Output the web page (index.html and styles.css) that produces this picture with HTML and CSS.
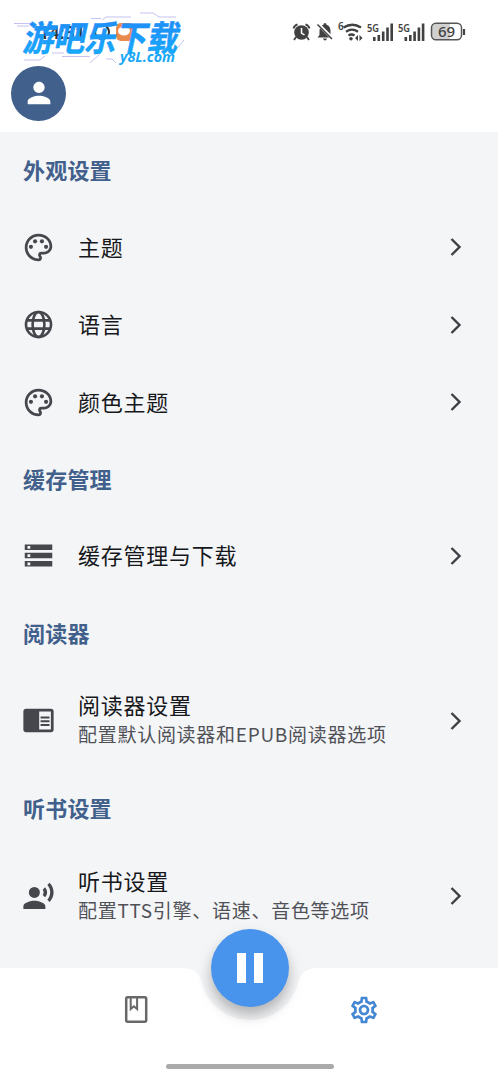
FILE: index.html
```html
<!DOCTYPE html>
<html lang="zh-CN">
<head>
<meta charset="utf-8">
<title>设置</title>
<link rel="stylesheet" href="styles.css">
</head>
<body>
<svg class="defs" width="0" height="0">
  <symbol id="palette" viewBox="0 0 24 24"><path d="M12 22C6.490 22 2 17.510 2 12S6.490 2 12 2s10 4.040 10 9c0 3.310-2.690 6-6 6h-1.770c-.28 0-.5.22-.5.5 0 .12.05.23.13.33.41.47.64 1.060.64 1.670A2.500 2.500 0 0 1 12 22zm0-18c-4.410 0-8 3.590-8 8s3.590 8 8 8c.28 0 .5-.22.5-.5a.54.54 0 0 0-.14-.35c-.41-.46-.63-1.050-.63-1.650a2.500 2.500 0 0 1 2.500-2.500H16c2.210 0 4-1.790 4-4 0-3.860-3.590-7-8-7z"/><circle cx="6.500" cy="11.500" r="1.500"/><circle cx="9.500" cy="7.500" r="1.500"/><circle cx="14.500" cy="7.500" r="1.500"/><circle cx="17.500" cy="11.500" r="1.500"/></symbol>
  <symbol id="chevron" viewBox="0 0 12 20"><path d="M1.500 2 9.500 10l-8 8" fill="none" stroke="currentColor" stroke-width="2.400"/></symbol>
</svg>
<div class="screen">
  <header class="top">
    <div class="status">
      <svg class="status-icons" viewBox="0 0 230 60" width="230" height="60">
        <g fill="#414141">
          <circle cx="31.500" cy="32.500" r="7.300"/>
          <path d="M26 37l-2 3M37 37l2 3M23.500 28.500q.5-3 4-4.200M39.500 28.500q-.5-3-4-4.200" fill="none" stroke="#414141" stroke-width="1.800"/>
          <path d="M31.500 28v5l3 2" fill="none" stroke="#fff" stroke-width="1.500"/>
          <path d="M47.500 37.500l2-2.500v-4q0-5 4-6.200q0-1.800 1.500-1.800t1.500 1.800q4 1.200 4 6.200v4l2 2.500zM53 38.500h4q-.5 2-2 2t-2-2z"/>
          <path d="M47.500 23.500l15 15" stroke="#fff" stroke-width="3.200"/>
          <path d="M47.500 24.500l14.500 14.500" stroke="#414141" stroke-width="1.500"/>
          <g fill="none" stroke="#414141" stroke-width="2.300"><path d="M73.500 27.500q9-5.500 17.500 0M76 31.800q6-4.200 12 0M78.500 35.500q3-2 6 0"/></g>
          <circle cx="81" cy="38.700" r="1.800"/><path d="M88 35v6l-3-3zM89.500 35v6l3-3z"/>
          <path d="M103 37h2.600v4H103zM107.500 35h2.600v6h-2.600zM111.900 31.500h2.600V41h-2.600zM116.200 27.500h2.600V41h-2.600zM120.400 23.500h2.600V41h-2.600zM134.500 37h2.600v4h-2.600zM139 35h2.600v6H139zM143.300 31.500h2.600V41h-2.600zM147.600 27.500h2.600V41h-2.600zM151.800 23.500h2.600V41h-2.600z"/>
          <text x="68" y="30" font-size="10" font-weight="600">6</text>
          <text x="97" y="31.500" font-size="11.500" font-weight="600" textLength="12" lengthAdjust="spacingAndGlyphs">5G</text>
          <text x="128" y="31.500" font-size="11.500" font-weight="600" textLength="12" lengthAdjust="spacingAndGlyphs">5G</text>
        </g>
        <path d="M167 24h13v15h-13q-5 0-5-4v-7q0-4 5-4z" fill="#d0d0d0"/>
        <rect x="161.500" y="23.300" width="30" height="16.500" rx="4.500" fill="none" stroke="#555" stroke-width="1.500"/>
        <path d="M194 29v6" stroke="#444" stroke-width="2.200"/>
        <text x="176.500" y="37" font-size="15" font-weight="500" text-anchor="middle" fill="#414141">69</text>
      </svg>
    </div>
    <div class="avatar"><svg viewBox="0 0 24 24" width="34" height="34"><path fill="#fff" d="M12 12c2.210 0 4-1.790 4-4s-1.790-4-4-4-4 1.790-4 4 1.790 4 4 4zm0 2c-2.670 0-8 1.340-8 4v2h16v-2c0-2.660-5.330-4-8-4z"/></svg></div>
    <svg class="watermark" viewBox="0 0 200 72" width="200" height="72">
      <defs><linearGradient id="blue" x1="0" y1="0" x2="0" y2="1"><stop offset="0" stop-color="#2583f5"/><stop offset="1" stop-color="#10b2ff"/></linearGradient></defs>
      <g class="clock"><text x="39" y="39" font-size="18">14:31</text><circle cx="102" cy="32" r="7" fill="none" stroke="#333" stroke-width="2"/></g>
      <rect x="116" y="23" width="18" height="18" rx="5" fill="#e88b4d"/><ellipse cx="124" cy="31" rx="6" ry="4.500" fill="#fff"/>
      <path d="M14 23.500h18M17 26h12M91 18.500h10M102 20l4-3h25M140 13h13l6 4h17M24 60h16l5-4M52 53h12M62 56.500h28M90 63l10-9M106 59h6l4 4M176 50l8-10" stroke="#b5b3ec" stroke-width=".8" fill="none"/>
      <g transform="translate(23 50.500) skewX(-12)"><text class="brand" x="-1" y="0" textLength="155" lengthAdjust="spacingAndGlyphs">游吧乐下载</text></g>
      <text class="domain" x="120" y="61.500" textLength="55" lengthAdjust="spacingAndGlyphs">y8L.com</text>
    </svg>
  </header>
  <main class="settings">
    <h2>外观设置</h2>
    <div class="row"><svg class="icon" viewBox="0 0 24 24"><use href="#palette"/></svg><div class="label">主题</div><svg class="chev"><use href="#chevron"/></svg></div>
    <div class="row"><svg class="icon" viewBox="0 0 24 24"><g fill="none" stroke="currentColor" stroke-width="1.900"><circle cx="12" cy="12" r="9.100"/><ellipse cx="12" cy="12" rx="4.300" ry="9.100"/><path d="M3.500 9h17M3.500 15h17"/></g></svg><div class="label">语言</div><svg class="chev"><use href="#chevron"/></svg></div>
    <div class="row"><svg class="icon" viewBox="0 0 24 24"><use href="#palette"/></svg><div class="label">颜色主题</div><svg class="chev"><use href="#chevron"/></svg></div>
    <h2>缓存管理</h2>
    <div class="row"><svg class="icon" viewBox="0 0 24 24"><path d="M2 20h20v-4H2v4zm2-3h2v2H4v-2zM2 4v4h20V4H2zm4 3H4V5h2v2zm-4 7h20v-4H2v4zm2-3h2v2H4v-2z"/></svg><div class="label">缓存管理与下载</div><svg class="chev"><use href="#chevron"/></svg></div>
    <h2>阅读器</h2>
    <div class="row tall"><svg class="icon" viewBox="0 0 24 24"><path fill-rule="evenodd" d="M3 3.500h18q2 0 2 2v13q0 2-2 2H3q-2 0-2-2v-13q0-2 2-2zm9.500 2v13H21v-13zM13.500 9H20v1.500h-6.500zM13.500 11.800H20v1.500h-6.500zM13.500 14.500H20V16h-6.500z"/></svg><div class="label">阅读器设置<small>配置默认阅读器和EPUB阅读器选项</small></div><svg class="chev"><use href="#chevron"/></svg></div>
    <h2>听书设置</h2>
    <div class="row tall"><svg class="icon" viewBox="0 0 24 24"><circle cx="9" cy="9" r="4"/><path d="M9 15c-2.670 0-8 1.340-8 4v2h16v-2c0-2.660-5.330-4-8-4zm7.760-9.640-1.680 1.690c.84 1.180.84 2.710 0 3.890l1.680 1.690c2.020-2.020 2.020-5.070 0-7.270zM20.070 2l-1.630 1.630c2.770 3.020 2.770 7.560 0 10.740L20.070 16c3.900-3.890 3.910-9.950 0-14z"/></svg><div class="label">听书设置<small>配置TTS引擎、语速、音色等选项</small></div><svg class="chev"><use href="#chevron"/></svg></div>
  </main>
  <nav class="bottom">
    <svg class="notch" viewBox="0 0 500 114"><path fill="#fff" d="M0 0H182Q197 0 201 12A50 50 0 0 0 299 12Q303 0 318 0H500V114H0z"/></svg>
    <div class="tabs">
      <svg class="tab" viewBox="0 0 32 32" width="32" height="32"><g fill="none" stroke="#686868" stroke-width="2.500"><rect x="6.200" y="3.300" width="20" height="24.500" rx="1.500"/><path stroke-width="2" d="M10.700 4v11l3.200-2.700 3.200 2.700V4"/></g></svg>
      <svg class="tab" viewBox="0 0 24 24" width="32" height="32"><path fill="#4488d4" d="M19.430 12.980c.04-.32.07-.64.07-.98s-.03-.66-.07-.98l2.110-1.650c.19-.15.24-.42.12-.64l-2-3.460c-.09-.16-.26-.25-.44-.25-.06 0-.12.01-.17.03l-2.490 1c-.52-.4-1.080-.73-1.690-.98l-.38-2.650C14.460 2.180 14.250 2 14 2h-4c-.25 0-.46.18-.49.42l-.38 2.650c-.61.25-1.170.59-1.690.98l-2.490-1c-.06-.02-.12-.03-.18-.03-.17 0-.34.09-.43.25l-2 3.460c-.13.22-.07.49.12.64l2.110 1.650c-.04.32-.07.65-.07.98s.03.66.07.98l-2.110 1.650c-.19.15-.24.42-.12.64l2 3.460c.09.16.26.25.44.25.06 0 .12-.01.17-.03l2.490-1c.52.4 1.080.73 1.690.98l.38 2.650c.03.24.24.42.49.42h4c.25 0 .46-.18.49-.42l.38-2.650c.61-.25 1.170-.59 1.690-.98l2.490 1c.06.02.12.03.18.03.17 0 .34-.09.43-.25l2-3.460c.12-.22.07-.49-.12-.64l-2.110-1.650zm-1.980-1.710c.04.31.05.52.05.73s-.02.43-.05.73l-.14 1.130.89.7 1.080.84-.7 1.210-1.270-.51-1.040-.42-.9.680c-.43.32-.84.56-1.250.73l-1.060.43-.16 1.130-.2 1.350h-1.400l-.19-1.350-.16-1.130-1.060-.43c-.43-.18-.83-.41-1.230-.71l-.91-.7-1.060.43-1.270.51-.7-1.210 1.080-.84.89-.7-.14-1.130c-.03-.31-.05-.54-.05-.74s.02-.43.05-.73l.14-1.130-.89-.7-1.080-.84.7-1.210 1.270.51 1.040.42.9-.68c.43-.32.84-.56 1.250-.73l1.060-.43.16-1.130.2-1.350h1.390l.19 1.350.16 1.130 1.060.43c.43.18.83.41 1.230.71l.91.7 1.060-.43 1.270-.51.7 1.210-1.070.85-.89.700.14 1.130zM12 8c-2.210 0-4 1.790-4 4s1.790 4 4 4 4-1.790 4-4-1.790-4-4-4zm0 6c-1.100 0-2-.9-2-2s.9-2 2-2 2 .9 2 2-.9 2-2 2z"/></svg>
    </div>
    <div class="handle"></div>
    <div class="pause"><i></i><i></i></div>
  </nav>
</div>
</body>
</html>
```
FILE: styles.css
```css
* { box-sizing: border-box; }
body { margin: 0; background: #fff; font-family: "Noto Sans CJK SC", sans-serif; }
.defs { position: absolute; }
.screen { width: 500px; height: 1082px; display: flex; flex-direction: column; overflow: hidden; position: relative; }
.top { height: 132px; position: relative; flex: none; }
.status { display: flex; justify-content: flex-end; height: 65.500px; }
.status-icons { font-family: "Noto Sans", sans-serif; flex: none; }
.avatar { width: 55px; height: 55px; margin-left: 11px; border-radius: 50%; background: #41608b; display: flex; align-items: center; justify-content: center; }
.watermark { position: absolute; left: 0; top: 0; overflow: visible; }
.clock { font-family: "Noto Sans", sans-serif; font-weight: 600; fill: #333; }
.brand { font-size: 35px; font-weight: 700; fill: url(#blue); stroke: #1a92fa; stroke-width: .5px; }
.domain { font: italic 700 14px "Noto Sans", sans-serif; fill: #18a8f5; }
.settings { height: 836px; flex: none; background: #f4f5f7; width: 498px; }
h2 { margin: 0; height: 76.250px; padding: 0 23px; line-height: 74px; font-size: 22px; font-weight: 700; letter-spacing: .2px; color: #41608b; }
.row { height: 77.500px; padding: 0 36px 0 22px; display: flex; align-items: center; }
.row.tall { height: 99.500px; }
.icon { width: 33px; height: 33px; flex: none; fill: currentColor; color: #46474d; }
.label { margin-left: 23px; padding-bottom: 3px; flex: 1; font-size: 22px; line-height: 30px; letter-spacing: .75px; color: #17181b; white-space: nowrap; }
.label small { display: block; font-size: 19px; line-height: 30px; letter-spacing: .72px; color: #505157; }
.chev { width: 12px; height: 20px; color: #3e3f44; flex: none; }
.bottom { height: 114px; position: relative; flex: none; display: flex; flex-direction: column; align-items: center; background: #f4f5f7; }
.notch { position: absolute; left: 0; top: 0; width: 500px; height: 114px; }
.tabs { position: relative; width: 100%; padding: 26px 120px 0; display: flex; justify-content: space-between; }
.handle { position: relative; margin-top: 38px; width: 168px; height: 5px; border-radius: 3px; background: #aaa; }
.pause { position: absolute; left: 211px; top: -39px; width: 78px; height: 78px; border-radius: 50%; background: #4893ec; box-shadow: 0 8px 14px rgba(0,0,0,.28); display: flex; align-items: center; justify-content: center; gap: 8px; }
.pause i { width: 9px; height: 30px; background: #fff; }
```
